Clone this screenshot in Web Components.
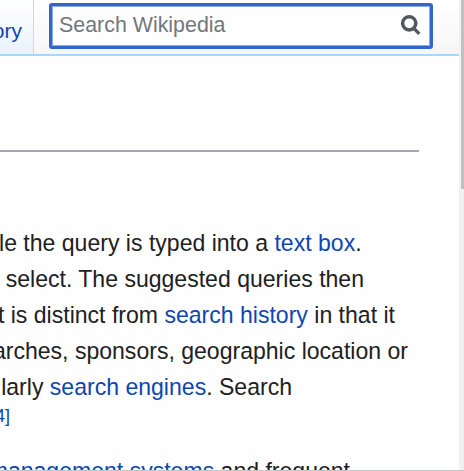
<!DOCTYPE html>
<html lang="en"><head><meta charset="utf-8"><title>Autocomplete</title>
<style>html,body{margin:0;height:100%;overflow:hidden;background:#fefefe}body{font-family:"Liberation Sans",Arial,sans-serif;color:#202122}</style>
</head><body><wiki-page></wiki-page>
<script>
const define=(name,html,setup)=>customElements.define(name,class extends HTMLElement{
 constructor(){super();this.attachShadow({mode:'open'}).innerHTML=html;}
 connectedCallback(){if(setup)setup(this);}
});
define('wiki-link',`<style>:host{color:#0d47af}</style><slot></slot>`);
define('nav-tab',`<style>:host{display:flex;justify-content:flex-end;box-sizing:border-box;width:34px;height:54px;padding-right:11px;border-right:1px solid #b3dff7;background:linear-gradient(#fff,#e8f3fb);font-size:21px;line-height:62px;color:#0d47af;overflow:hidden}</style><slot></slot>`);
define('search-field',`<style>:host{display:flex;align-items:center;justify-content:space-between;box-sizing:border-box;width:384px;height:46px;margin:3px 0 0 15px;border:3px solid #36c;border-radius:3px;box-shadow:inset 0 0 0 1px #8dabe0;background:#fefefe;padding:0 9px 0 7px;font-size:21.4px;line-height:40px;color:#72777d}span{margin-top:-3px}svg{display:block;width:24px;height:24px}</style><span><slot></slot></span><svg viewBox="0 0 24 24" fill="none" stroke="#50595f"><circle cx="12.2" cy="9.3" r="6.6" stroke-width="3.5"/><path d="M16.5 14L22.3 19.8" stroke-width="3.3"/></svg>`);
define('top-bar',`<style>:host{display:flex;box-sizing:border-box;height:56px;border-bottom:2px solid #a7d7f9;background:linear-gradient(#fff,#f6f6f6)}</style><slot></slot>`);
define('text-line',`<style>:host{display:flex;justify-content:flex-end;box-sizing:border-box;width:var(--end);height:36px;line-height:36px;font-size:23.05px;white-space:pre}:host([note]){font-size:18px;line-height:23px}</style><span><slot></slot></span>`,el=>el.style.setProperty('--end',el.getAttribute('end')+'px'));
define('page-scrollbar',`<style>:host{display:block;width:5px;height:471px;background:#f1f1f1}i{display:block;height:189px;margin-left:2px;background:#c1c1c1}</style><i></i>`);
define('wiki-page',`<style>:host{display:flex;width:464px;height:471px;overflow:hidden;position:relative}main{width:459px;height:471px;overflow:hidden;flex:none}hr{height:2px;width:419px;border:0;background:#a2a9b1;margin:94px 0 73px}.gap{height:12px}.edge{position:absolute;left:0;right:0;bottom:0;height:1px;background:#bdc8cc}</style>
<main><top-bar><nav-tab>ory</nav-tab><search-field>Search Wikipedia</search-field></top-bar><hr>
<text-line end="361.6">le the query is typed into a <wiki-link>text box</wiki-link>.</text-line>
<text-line end="364">select. The suggested queries then</text-line>
<text-line end="395">t is distinct from <wiki-link>search history</wiki-link> in that it</text-line>
<text-line end="408">arches, sponsors, geographic location or</text-line>
<text-line end="292">larly <wiki-link>search engines</wiki-link>. Search</text-line>
<text-line note end="10"><wiki-link>4]</wiki-link></text-line>
<div class="gap"></div>
<text-line end="350"><wiki-link>management systems</wiki-link> and frequent</text-line></main>
<page-scrollbar></page-scrollbar><div class="edge"></div>`);
</script></body></html>
